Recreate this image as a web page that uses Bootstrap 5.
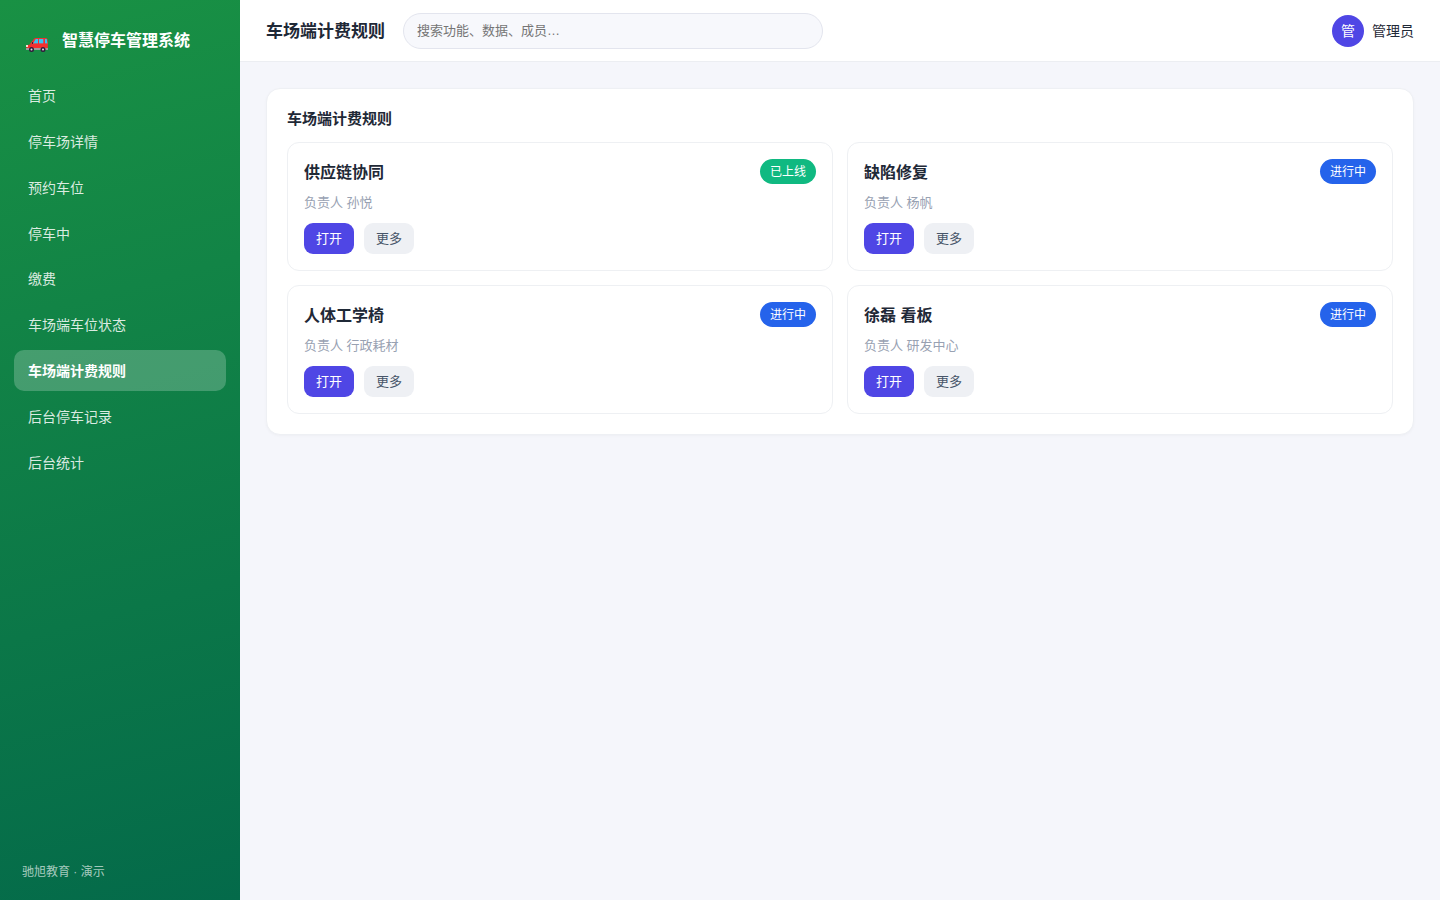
<!DOCTYPE html>
<html lang="zh-CN">
<head>
  <meta charset="UTF-8" />
  <meta name="viewport" content="width=device-width, initial-scale=1" />
  <title>车场端计费规则 - 智慧停车管理系统</title>
  <link href="https://cdn.jsdelivr.net/npm/bootstrap@5.3.2/dist/css/bootstrap.min.css" rel="stylesheet" />
  <style>
    body {
      font-family: "Liberation Sans", "Noto Sans CJK SC", sans-serif;
      font-size: 14px;
      line-height: 20px;
      color: #1f2937;
      background: #f5f6fb;
    }
    .sidebar {
      width: 240px;
      padding: 22px 14px 18px;
      background: linear-gradient(165deg, #199144, #046a4a);
    }
    .brand-row {
      height: 38px;
      padding: 0 10px 0 11px;
      margin-bottom: 15px;
      gap: 12px;
      font-size: 16px;
    }
    .brand-row svg {
      margin-top: 7px;
    }
    .side-menu {
      gap: 5px;
    }
    .side-menu .nav-link {
      height: 40.86px;
      padding: 11px 14px 9.8px;
      border-radius: 10px;
      color: rgba(255, 255, 255, .85);
    }
    .side-menu .nav-link.active {
      padding-top: 10.5px;
      background: rgba(255, 255, 255, .22);
      color: #fff;
      font-weight: 700;
    }
    .side-foot {
      padding: 0 8px;
      font-size: 12px;
      color: rgba(255, 255, 255, .65);
    }
    .topbar {
      height: 62px;
      padding: 0 26px;
      gap: 18px;
      border-bottom: 1px solid #eceef2;
    }
    .topbar h1 {
      font-size: 17px;
      padding-top: 4px;
    }
    .user-name {
      padding-top: 1px;
    }
    .search-box {
      width: 420px;
      height: 36px;
      padding: 0 13px;
      font-size: 13px;
      background: #f7f8fc;
      border-color: #e3e5ee;
    }
    .search-box::placeholder {
      color: #757575;
    }
    .avatar {
      width: 32px;
      height: 32px;
      background: #4f46e5;
    }
    .page-body {
      padding: 26px;
    }
    .panel {
      padding: 20px;
      border: 1px solid #eef0f4;
      border-radius: 14px;
      box-shadow: 0 1px 3px rgba(16, 24, 40, .03);
    }
    .panel h2 {
      font-size: 15px;
      line-height: 19px;
      margin-bottom: 14px;
    }
    .rules {
      --bs-gutter-x: 14px;
      --bs-gutter-y: 14px;
    }
    .rule-item {
      padding: 16px;
      border: 1px solid #eef0f3;
      border-radius: 12px;
    }
    .rule-item h3 {
      font-size: 16px;
      padding-top: 2px;
    }
    .state {
      height: 25px;
      padding: 0 10px;
      font-size: 12px;
      line-height: 26px;
    }
    .state-online {
      background: #10b981;
    }
    .state-doing {
      background: #2563eb;
    }
    .owner {
      margin: 9px 0 10px;
      font-size: 13px;
      color: #98a1b2;
    }
    .btn-rule {
      --bs-btn-padding-x: 12px;
      --bs-btn-padding-y: 0;
      --bs-btn-font-size: 13px;
      --bs-btn-border-width: 0;
      --bs-btn-border-radius: 9px;
      line-height: 31px;
    }
    .btn-open {
      --bs-btn-color: #fff;
      --bs-btn-bg: #4f46e5;
      --bs-btn-hover-color: #fff;
      --bs-btn-hover-bg: #4338ca;
    }
    .btn-more {
      --bs-btn-color: #475569;
      --bs-btn-bg: #eef0f4;
      --bs-btn-hover-bg: #e2e5eb;
    }
    .rule-actions {
      gap: 10px;
    }
  </style>
</head>
<body>
  <div class="d-flex min-vh-100">
    <!-- Menú lateral -->
    <aside class="sidebar d-flex flex-column flex-shrink-0">
      <div class="brand-row d-flex align-items-center text-white fw-bold">
        <svg width="25" height="18" viewBox="0 0 25 18">
          <path d="M5 8 9 2.7Q9.7 2 11 2H21Q22.3 2 22.5 3.5L23 8Z" fill="#f52f2f" />
          <path d="M8 7.7 10.6 3H13v4.7ZM14 3h4.3v4.7H14ZM20 3h1.7l.8 4.7H20Z" fill="#35c5f4" />
          <path d="M2 9.2 8 7.5H22.8V13H1.5V10Z" fill="#f52f2f" />
          <path d="M1 12H23v2H1Z" fill="#9b9b9b" />
          <path d="M1 9h2v2H1Z" fill="#ffe1d6" />
          <path d="M7 6h1v2H7Z" fill="#38203b" />
          <circle cx="6.5" cy="13.5" r="2.5" fill="#321b3b" />
          <circle cx="18" cy="13.5" r="2.5" fill="#321b3b" />
          <circle cx="6.5" cy="13.5" r="1" fill="#e8e3ec" />
          <circle cx="18" cy="13.5" r="1" fill="#e8e3ec" />
        </svg>
        <span>智慧停车管理系统</span>
      </div>
      <nav class="side-menu nav flex-column">
        <a class="nav-link" href="#">首页</a>
        <a class="nav-link" href="#">停车场详情</a>
        <a class="nav-link" href="#">预约车位</a>
        <a class="nav-link" href="#">停车中</a>
        <a class="nav-link" href="#">缴费</a>
        <a class="nav-link" href="#">车场端车位状态</a>
        <a class="nav-link active" href="#">车场端计费规则</a>
        <a class="nav-link" href="#">后台停车记录</a>
        <a class="nav-link" href="#">后台统计</a>
      </nav>
      <div class="side-foot mt-auto">驰旭教育 · 演示</div>
    </aside>

    <div class="flex-grow-1">
      <header class="topbar d-flex align-items-center bg-white">
        <h1 class="fw-bold mb-0">车场端计费规则</h1>
        <input type="text" class="search-box form-control rounded-pill" placeholder="搜索功能、数据、成员…">
        <div class="d-flex align-items-center gap-2 ms-auto">
          <span class="avatar rounded-circle text-white d-flex align-items-center justify-content-center">管</span>
          <span class="user-name">管理员</span>
        </div>
      </header>

      <main class="page-body">
        <section class="panel bg-white">
          <h2 class="fw-bold">车场端计费规则</h2>
          <div class="rules row row-cols-2" id="rulesBody"></div>
        </section>
      </main>
    </div>
  </div>

  <script>
    const rules = [
      { nombre: '供应链协同', owner: '孙悦', estado: '已上线', clase: 'state-online' },
      { nombre: '缺陷修复', owner: '杨帆', estado: '进行中', clase: 'state-doing' },
      { nombre: '人体工学椅', owner: '行政耗材', estado: '进行中', clase: 'state-doing' },
      { nombre: '徐磊 看板', owner: '研发中心', estado: '进行中', clase: 'state-doing' }
    ];

    document.getElementById('rulesBody').innerHTML = rules.map(item => `
      <div class="col">
        <div class="rule-item">
          <div class="d-flex justify-content-between align-items-center">
            <h3 class="fw-bold mb-0">${item.nombre}</h3>
            <span class="state ${item.clase} rounded-pill text-white">${item.estado}</span>
          </div>
          <div class="owner">负责人 ${item.owner}</div>
          <div class="rule-actions d-flex">
            <button class="btn btn-rule btn-open">打开</button>
            <button class="btn btn-rule btn-more">更多</button>
          </div>
        </div>
      </div>
    `).join('');
  </script>
  <script src="https://cdn.jsdelivr.net/npm/bootstrap@5.3.2/dist/js/bootstrap.bundle.min.js"></script>
</body>
</html>
